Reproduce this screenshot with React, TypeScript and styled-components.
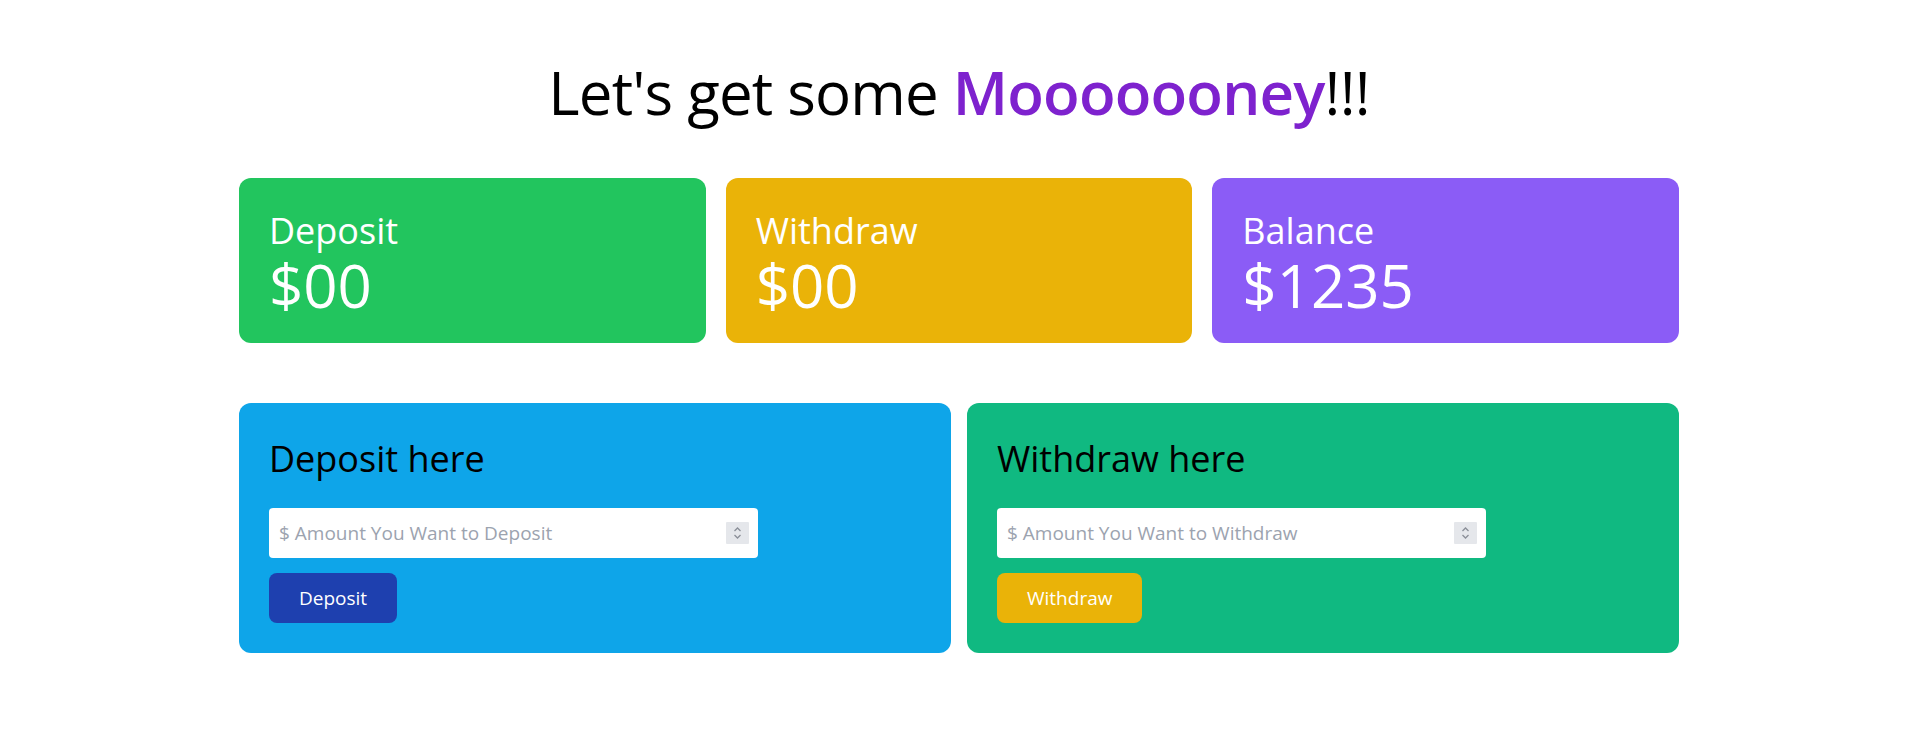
import React from "react";
import styled, { createGlobalStyle } from "styled-components";

const GlobalStyle = createGlobalStyle`
  html, body {
    margin: 0;
    padding: 0;
    background: #ffffff;
  }
  body {
    font-family: "Open Sans", "Noto Sans", sans-serif;
    color: #000000;
  }
  * { box-sizing: border-box; }
`;

const Page = styled.main`
  padding-top: 62px;
`;

const Title = styled.h1`
  margin: 0 0 56px;
  text-align: center;
  font-size: 60px;
  line-height: 60px;
  font-weight: 400;
  letter-spacing: -0.8px;
  color: #000000;
`;

const Accent = styled.span`
  color: #7e22ce;
  font-weight: 600;
`;

const Container = styled.div`
  max-width: 1440px;
  margin: 0 auto;
`;

const StatsRow = styled.section`
  display: grid;
  grid-template-columns: repeat(3, 1fr);
  gap: 20px;
`;

const StatCard = styled.div<{ $bg: string }>`
  background: ${(p) => p.$bg};
  border-radius: 12px;
  padding: 33px 30px 28px;
  color: #ffffff;
  display: flex;
  flex-direction: column;
  gap: 4px;
`;

const StatLabel = styled.div`
  font-size: 36px;
  line-height: 40px;
`;

const StatValue = styled.div`
  font-size: 60px;
  line-height: 60px;
`;

const ActionsRow = styled.section`
  display: grid;
  grid-template-columns: 1fr 1fr;
  gap: 16px;
  margin-top: 60px;
`;

const ActionCard = styled.div<{ $bg: string }>`
  background: ${(p) => p.$bg};
  border-radius: 12px;
  padding: 30px;
  display: flex;
  flex-direction: column;
  align-items: flex-start;
`;

const ActionTitle = styled.h2`
  margin: 6px 0 29px;
  font-size: 36px;
  line-height: 40px;
  font-weight: 400;
  color: #000000;
`;

const InputBox = styled.label`
  width: 75%;
  height: 50px;
  background: #ffffff;
  border-radius: 4px;
  display: flex;
  align-items: center;
  padding: 0 9px 0 10px;
  gap: 8px;
`;

const AmountInput = styled.input`
  flex: 1;
  min-width: 0;
  border: none;
  outline: none;
  background: transparent;
  font-family: "Open Sans", "Noto Sans", sans-serif;
  font-size: 19px;
  color: #111827;
  padding: 0;
  -moz-appearance: textfield;
  &::placeholder {
    color: #9ca3af;
  }
  &::-webkit-outer-spin-button,
  &::-webkit-inner-spin-button {
    -webkit-appearance: none;
    margin: 0;
  }
`;

const Spinner = styled.span`
  width: 23px;
  height: 22px;
  background: #e5e7eb;
  border-radius: 1px;
  display: flex;
  align-items: center;
  justify-content: center;
  flex-shrink: 0;
`;

const ActionButton = styled.button<{ $bg: string }>`
  margin-top: 15px;
  height: 50px;
  padding: 0 30px;
  border: none;
  border-radius: 8px;
  background: ${(p) => p.$bg};
  color: #ffffff;
  font-family: "Open Sans", "Noto Sans", sans-serif;
  font-size: 19px;
  cursor: pointer;
`;

const SpinIcon = () => (
  <svg width="23" height="22" viewBox="0 0 23 22" fill="none">
    <polyline points="8.5,9 11.5,6 14.5,9" stroke="#8b8f98" strokeWidth="1.3" fill="none" />
    <polyline points="8.5,13 11.5,16 14.5,13" stroke="#8b8f98" strokeWidth="1.3" fill="none" />
  </svg>
);

const stats = [
  { label: "Deposit", value: "$00", bg: "#22c55e" },
  { label: "Withdraw", value: "$00", bg: "#eab308" },
  { label: "Balance", value: "$1235", bg: "#8b5cf6" },
];

const actions = [
  {
    title: "Deposit here",
    placeholder: "$ Amount You Want to Deposit",
    button: "Deposit",
    bg: "#0ea5e9",
    buttonBg: "#1e40af",
  },
  {
    title: "Withdraw here",
    placeholder: "$ Amount You Want to Withdraw",
    button: "Withdraw",
    bg: "#10b981",
    buttonBg: "#eab308",
  },
];

export default function App() {
  return (
    <>
      <GlobalStyle />
      <Page>
        <Title>
          Let's get some <Accent>Mooooooney</Accent>!!!
        </Title>
        <Container>
          <StatsRow>
            {stats.map((s) => (
              <StatCard key={s.label} $bg={s.bg}>
                <StatLabel>{s.label}</StatLabel>
                <StatValue>{s.value}</StatValue>
              </StatCard>
            ))}
          </StatsRow>
          <ActionsRow>
            {actions.map((a) => (
              <ActionCard key={a.title} $bg={a.bg}>
                <ActionTitle>{a.title}</ActionTitle>
                <InputBox>
                  <AmountInput type="number" placeholder={a.placeholder} />
                  <Spinner>
                    <SpinIcon />
                  </Spinner>
                </InputBox>
                <ActionButton $bg={a.buttonBg}>{a.button}</ActionButton>
              </ActionCard>
            ))}
          </ActionsRow>
        </Container>
      </Page>
    </>
  );
}
